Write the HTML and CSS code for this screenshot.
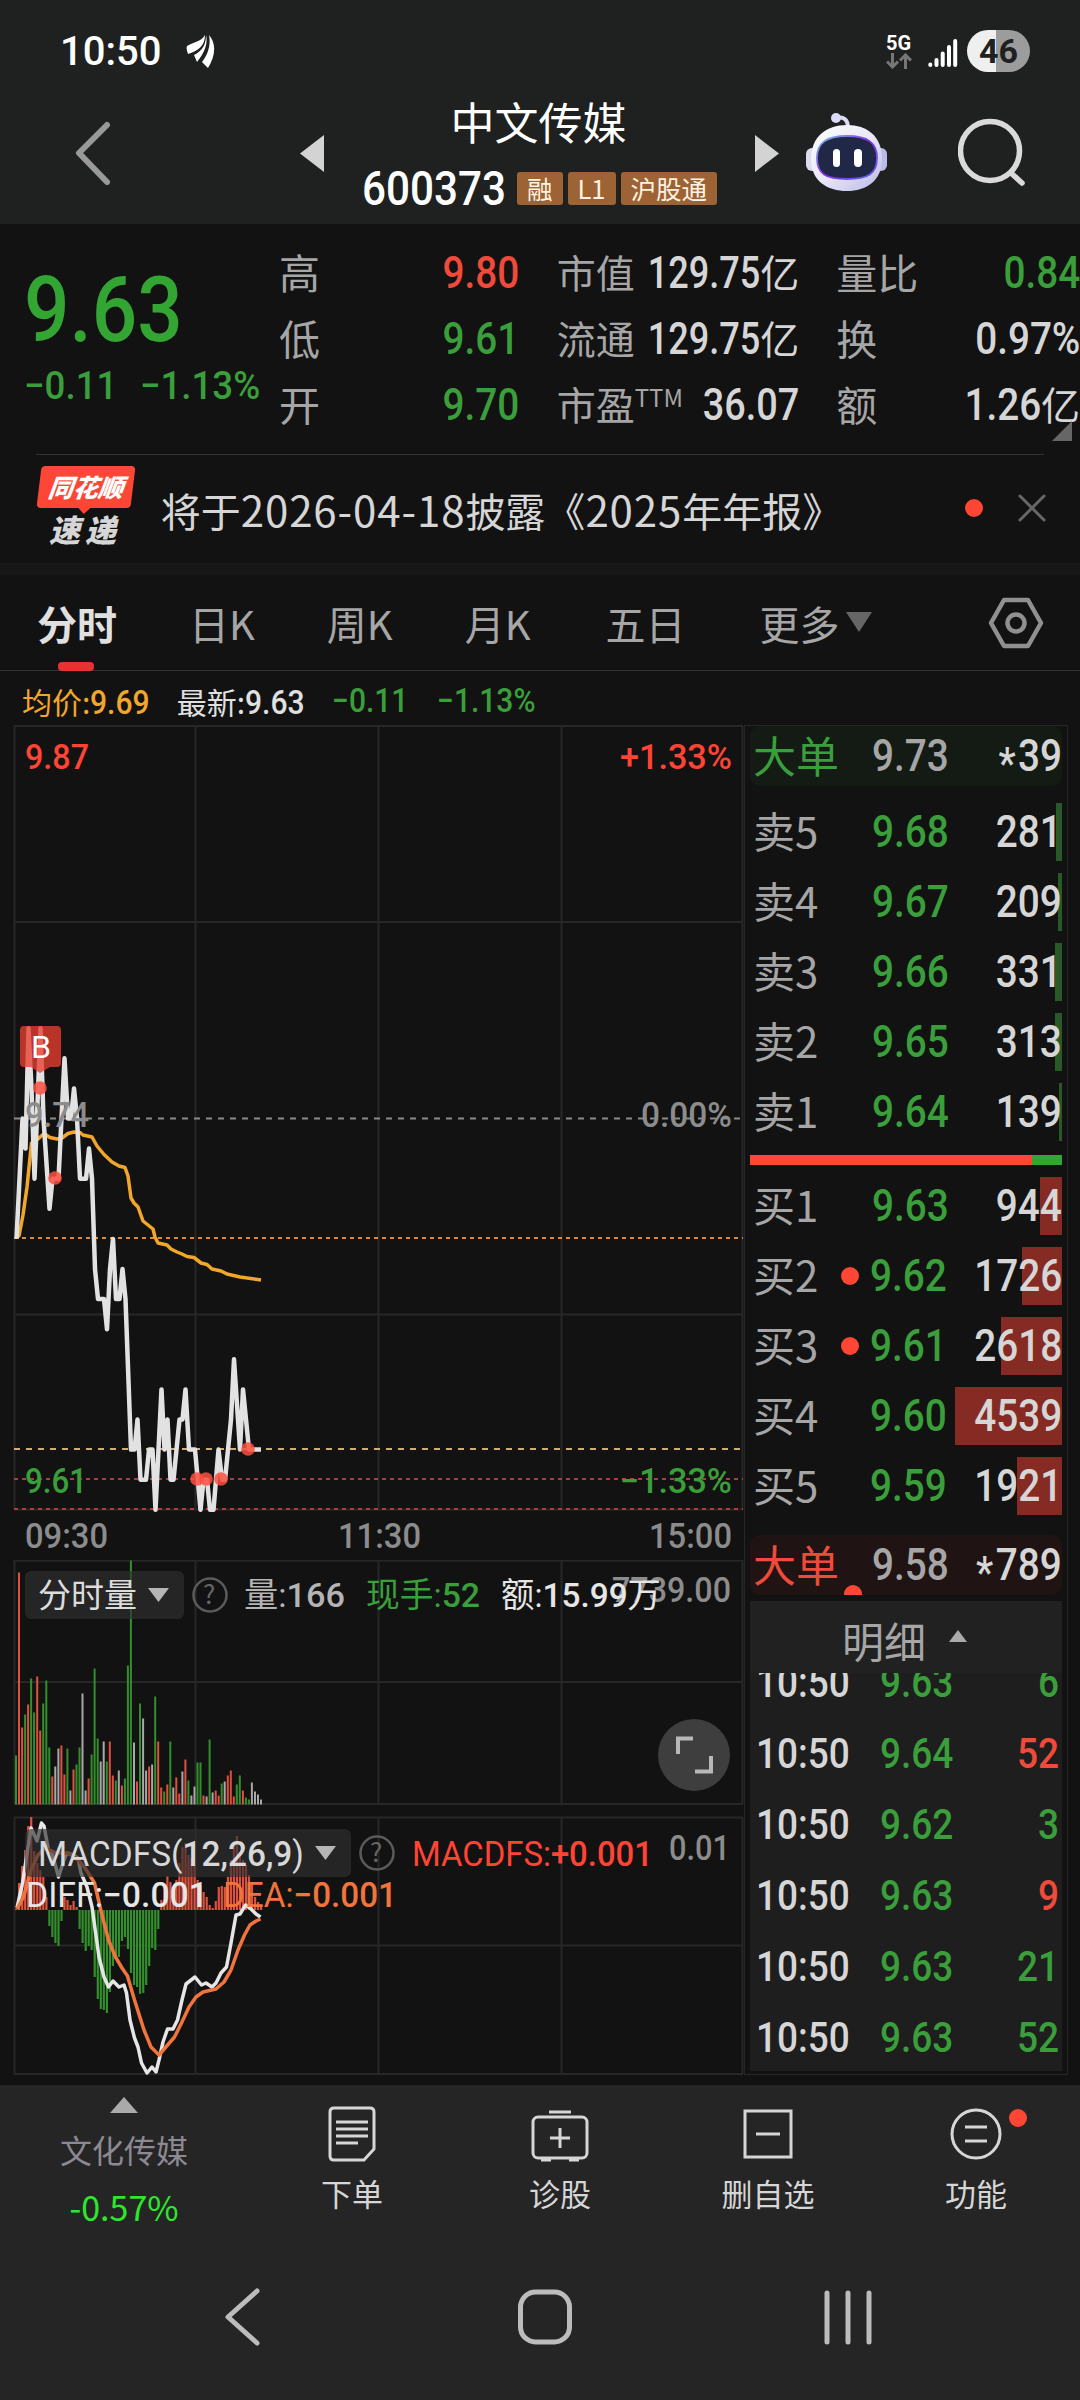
FILE: index.html
```html
<!-- index.html -->
<!DOCTYPE html>
<html lang="zh-CN">
<head>
    <meta charset="UTF-8">
    <title>中文传媒 600373</title>
    <link rel="stylesheet" href="styles.css">
</head>
<body>

    <!-- status bar -->
    <div class="statusbar">
        <span class="clock">10:50</span>
        <svg class="leaf" width="30" height="34" viewBox="0 0 30 34" fill="#fff">
            <path d="M1 12C9 7 15 8 19 1C19 12 12 17 2 20C1 17 0 14 1 12Z"/>
            <path d="M20 1C22 9 19 18 11 28L8 21C16 17 20 11 20 1Z"/>
            <path d="M23 1C31 10 29 23 22 34L16 28C22 20 25 11 23 1Z"/>
        </svg>
        <div class="status-right">
            <div class="network">
                <span>5G</span>
                <svg width="26" height="16" viewBox="0 0 26 16" fill="none" stroke="#777" stroke-width="3">
                    <path d="M6.5 0V14M1 8.5L6.5 14L12 8.5M19.500 16V2M14 7.500L19.500 2L25 7.500"/>
                </svg>
            </div>
            <svg class="signal" width="30" height="30" viewBox="0 0 30 30" stroke="#fff" stroke-width="4" stroke-linecap="round">
                <path d="M2.300 26.500V27M8.500 22V27M14.700 15.500V27M21 9V27M27.200 3V27"/>
            </svg>
            <span class="battery">46</span>
        </div>
    </div>

    <!-- title bar -->
    <div class="topbar">
        <svg class="back" width="36" height="64" viewBox="0 0 36 64" fill="none" stroke="#999" stroke-width="6" stroke-linecap="round" stroke-linejoin="round">
            <path d="M32 4L4 32L32 61"/>
        </svg>
        <svg class="prev" width="24" height="37" viewBox="0 0 24 37"><path d="M24 0V37L0 18.500Z" fill="#d3d3d3"/></svg>
        <div class="stock">
            <div class="stock-name">中文传媒</div>
            <div class="stock-code">
                <span class="num">600373</span>
                <span class="badge">融</span>
                <span class="badge">L1</span>
                <span class="badge">沪股通</span>
            </div>
        </div>
        <svg class="next" width="24" height="37" viewBox="0 0 24 37"><path d="M0 0V37L24 18.500Z" fill="#d3d3d3"/></svg>
        <svg class="robot" width="82" height="78" viewBox="0 0 82 78">
            <defs>
                <linearGradient id="shell" x1="0" y1="0" x2="1" y2="1">
                    <stop offset="0" stop-color="#ffffff"/>
                    <stop offset=".5" stop-color="#e9e8f8"/>
                    <stop offset="1" stop-color="#b9b7e6"/>
                </linearGradient>
                <linearGradient id="rim" x1="0" y1="0" x2="1" y2="1">
                    <stop offset="0" stop-color="#6cc8e0"/>
                    <stop offset=".5" stop-color="#8a2be0"/>
                    <stop offset="1" stop-color="#5a6af0"/>
                </linearGradient>
            </defs>
            <path d="M30 5C38 3 42 7 42 15" fill="none" stroke="#dcdcf5" stroke-width="4"/>
            <circle cx="30" cy="5" r="5" fill="#dcdcf8"/>
            <rect x="0" y="35" width="14" height="23" rx="6" fill="#dcdcf0"/>
            <rect x="68" y="35" width="13" height="23" rx="6" fill="#b9bbe8"/>
            <path d="M41 12C61 12 76 23 76 46C76 68 60 78 41 78C21 78 5 68 5 46C5 24 20 12 41 12Z" fill="url(#shell)"/>
            <path d="M41 23C62 23 71 30 71 45C71 61 62 66 41 66C20 66 11 61 11 45C11 30 20 23 41 23Z" fill="#212747" stroke="url(#rim)" stroke-width="1.800"/>
            <rect x="27" y="36" width="7" height="18" rx="3.500" fill="#fff"/>
            <rect x="48" y="36" width="8" height="18" rx="4" fill="#fff"/>
        </svg>
        <svg class="search" width="68" height="68" viewBox="0 0 68 68" fill="none" stroke="#dadada" stroke-width="5.500" stroke-linecap="round">
            <circle cx="32" cy="33" r="29.500"/>
            <path d="M53 55L64 65"/>
        </svg>
    </div>

    <!-- quote panel -->
    <div class="quote">
        <div class="price-box">
            <div class="price num green">9.63</div>
            <div class="change num green"><span>−0.11</span><span>−1.13%</span></div>
        </div>
        <div class="quote-col col-a">
            <div><label>高</label><b class="num red">9.80</b></div>
            <div><label>低</label><b class="num green">9.61</b></div>
            <div><label>开</label><b class="num green">9.70</b></div>
        </div>
        <div class="quote-col col-b">
            <div><label>市值</label><b class="num">129.75</b><i>亿</i></div>
            <div><label>流通</label><b class="num">129.75</b><i>亿</i></div>
            <div><label>市盈<sup>TTM</sup></label><b class="num">36.07</b></div>
        </div>
        <div class="quote-col col-c">
            <div><label>量比</label><b class="num green">0.84</b></div>
            <div><label>换</label><b class="num">0.97%</b></div>
            <div><label>额</label><b class="num">1.26</b><i>亿</i></div>
        </div>
        <span class="corner"></span>
    </div>

    <div class="notice">
        <div class="notice-logo">
            <span class="logo-top">同花顺</span>
            <span class="logo-bottom">速 递</span>
        </div>
        <span class="notice-text">将于<em>2026-04-18</em>披露《<em>2025</em>年年报》</span>
        <span class="dot"></span>
        <svg class="close" width="28" height="28" viewBox="0 0 28 28" stroke="#666" stroke-width="3" stroke-linecap="round"><path d="M2 2L26 26M26 2L2 26"/></svg>
    </div>

    <!-- period tabs -->
    <div class="tabs">
        <span class="tab active">分时</span>
        <span class="tab">日K</span>
        <span class="tab">周K</span>
        <span class="tab">月K</span>
        <span class="tab five">五日</span>
        <span class="tab more">更多</span>
        <svg class="setting" width="56" height="52" viewBox="0 0 56 52" fill="none" stroke="#909090" stroke-width="4.500" stroke-linejoin="round">
            <path d="M16 3H40L53 26L40 49H16L3 26Z"/>
            <circle cx="28" cy="26" r="8.500"/>
        </svg>
    </div>

    <div class="info">
        <span class="orange">均价:<b class="num">9.69</b></span>
        <span class="white">最新:<b class="num">9.63</b></span>
        <span class="num green">−0.11</span>
        <span class="num green">−1.13%</span>
    </div>

    <div class="main">
        <div class="charts">

            <svg class="chart" width="744" height="835" viewBox="0 725 744 835">
                <g class="grid">
                    <path d="M14.500 726V1509M195.500 726V1509M378.500 726V1509M561.500 726V1509M742.500 726V1509"/>
                    <path d="M14 726H743M14 922H743M14 1314.500H743M14 1509.500H743"/>
                </g>
                <path d="M14 1118.500H743" stroke="#8a8a8a" stroke-width="2" stroke-dasharray="6 6"/>
                <path d="M14 1238H743" stroke="#d98a3c" stroke-width="2" stroke-dasharray="4 4"/>
                <path d="M14 1449H743" stroke="#cfae74" stroke-width="2" stroke-dasharray="6 6"/>
                <path d="M14 1479H743M14 1509H743" stroke="#b23a44" stroke-width="2" stroke-dasharray="4 4"/>
                <polyline id="avg-line" fill="none" stroke="#f2a72a" stroke-width="3.500" stroke-linejoin="round"/>
                <polyline id="price-line" fill="none" stroke="#e2e2e2" stroke-width="4.500" stroke-linejoin="round"/>
                <g id="trade-dots" fill="#fa5040" fill-opacity=".85"></g>
                <path d="M24 1026H57Q61 1026 61 1030V1063Q61 1067 57 1067H50L40 1073L31 1067H24Q20 1067 20 1063V1030Q20 1026 24 1026Z" fill="#e93c2e" fill-opacity=".78"/>
                <text class="latin" x="31" y="1058" font-size="32" fill="#fff" textLength="20" lengthAdjust="spacingAndGlyphs">B</text>
                <g class="label" font-size="35">
                    <text x="25" y="769" fill="#ff4433" textLength="64" lengthAdjust="spacingAndGlyphs">9.87</text>
                    <text x="620" y="769" fill="#ff4433" textLength="112" lengthAdjust="spacingAndGlyphs">+1.33%</text>
                    <text x="25" y="1127" fill="#8c8c8c" textLength="64" lengthAdjust="spacingAndGlyphs">9.74</text>
                    <text x="641" y="1127" fill="#8c8c8c" textLength="91" lengthAdjust="spacingAndGlyphs">0.00%</text>
                    <text x="25" y="1493" fill="#3a9f3a" textLength="62" lengthAdjust="spacingAndGlyphs">9.61</text>
                    <text x="620" y="1493" fill="#3a9f3a" textLength="112" lengthAdjust="spacingAndGlyphs">−1.33%</text>
                    <text x="25" y="1548" fill="#8c8c8c" textLength="83" lengthAdjust="spacingAndGlyphs">09:30</text>
                    <text x="338" y="1548" fill="#8c8c8c" textLength="83" lengthAdjust="spacingAndGlyphs">11:30</text>
                    <text x="649" y="1548" fill="#8c8c8c" textLength="83" lengthAdjust="spacingAndGlyphs">15:00</text>
                </g>
            </svg>

            <svg class="chart" width="744" height="256" viewBox="0 1560 744 256">
                <g class="grid">
                    <path d="M14.500 1560V1804M195.500 1560V1804M378.500 1560V1804M561.500 1560V1804M742.500 1560V1804"/>
                    <path d="M14 1560.500H743M14 1682H743M14 1804H743"/>
                </g>
                <g id="volume"></g>
                <rect x="25" y="1571" width="159" height="48" rx="6" fill="#303030" fill-opacity=".65"/>
                <text x="38" y="1607" font-size="33" fill="#dcdcdc" textLength="99">分时量</text>
                <path d="M148 1588H169L158.500 1602Z" fill="#b5b5b5"/>
                <circle cx="210" cy="1595" r="16.500" class="help"/>
                <text x="203" y="1604" font-size="26" fill="#666">?</text>
                <text class="label" x="612" y="1602" font-size="35" fill="#8c8c8c" textLength="119" lengthAdjust="spacingAndGlyphs">7739.00</text>
                <g class="mix" font-size="34">
                    <text x="244" y="1607" fill="#b4b4b4" textLength="101" lengthAdjust="spacingAndGlyphs">量:<tspan class="label">166</tspan></text>
                    <text x="366" y="1607" fill="#3a9f3a" textLength="114" lengthAdjust="spacingAndGlyphs">现手:<tspan class="label">52</tspan></text>
                    <text x="501" y="1607" fill="#e6e6e6" textLength="160" lengthAdjust="spacingAndGlyphs">额:<tspan class="label">15.99</tspan>万</text>
                </g>
                <circle cx="694" cy="1755" r="36" fill="#3e3e3e"/>
                <path d="M678 1754V1738.500H693M695 1771.500H711V1756" fill="none" stroke="#b8b8b8" stroke-width="4"/>
            </svg>

            <svg class="chart" width="744" height="260" viewBox="0 1816 744 260">
                <g class="grid">
                    <path d="M14.500 1817V2074M195.500 1817V2074M378.500 1817V2074M561.500 1817V2074M742.500 1817V2074"/>
                    <path d="M14 1817.500H743M14 1945.500H743M14 2074H743"/>
                </g>
                <g id="macd"></g>
                <polyline id="diff-line" fill="none" stroke="#e6e6e6" stroke-width="3.500" stroke-linejoin="round"/>
                <polyline id="dea-line" fill="none" stroke="#f0743c" stroke-width="3.500" stroke-linejoin="round"/>
                <rect x="25" y="1829" width="326" height="48" rx="6" fill="#303030" fill-opacity=".65"/>
                <g class="mix" font-size="35">
                    <text x="38" y="1866" fill="#d8d8d8" textLength="266" lengthAdjust="spacingAndGlyphs">MACDFS(<tspan class="label">12,26,9</tspan>)</text>
                    <text x="412" y="1866" fill="#ff4433" textLength="241" lengthAdjust="spacingAndGlyphs">MACDFS:<tspan class="label">+0.001</tspan></text>
                    <text x="26" y="1907" fill="#e6e6e6" textLength="182" lengthAdjust="spacingAndGlyphs">DIFF:<tspan class="label">−0.001</tspan></text>
                    <text x="223" y="1907" fill="#f0743c" textLength="174" lengthAdjust="spacingAndGlyphs">DEA:<tspan class="label">−0.001</tspan></text>
                </g>
                <text class="label" x="669" y="1860" font-size="35" fill="#8c8c8c" textLength="61" lengthAdjust="spacingAndGlyphs">0.01</text>
                <path d="M315 1846H336L325.500 1860Z" fill="#b5b5b5"/>
                <circle cx="377" cy="1853" r="16.500" class="help"/>
                <text x="370" y="1862" font-size="26" fill="#666">?</text>
            </svg>
        </div>

        <!-- order book -->
        <div class="book">
            <div class="big sell"><label>大单</label><b class="num">9.73</b><b class="num qty"><sub>*</sub>39</b></div>
            <div class="rows" id="sell-rows"></div>
            <div class="ratio"><span></span></div>
            <div class="rows" id="buy-rows"></div>
            <div class="big buy"><label>大单</label><b class="num">9.58</b><b class="num qty"><sub>*</sub>789</b></div>
            <div class="detail">
                <div class="detail-head">明细<span class="up"></span></div>
                <div class="detail-list" id="detail-list"></div>
            </div>
        </div>
    </div>

    <!-- bottom bar -->
    <div class="bottom">
        <div class="sector">
            <span class="up"></span>
            <span class="sector-name">文化传媒</span>
            <span class="sector-pct">-0.57%</span>
        </div>
        <div class="action">
            <svg width="50" height="58" viewBox="0 0 50 58" class="line">
                <path d="M7 3H43Q47 3 47 7V44L37 55H7Q3 55 3 51V7Q3 3 7 3Z"/>
                <path d="M9 17H41M9 24H41M9 31H41M9 38H31"/>
            </svg>
            <span>下单</span>
        </div>
        <div class="action">
            <svg width="58" height="58" viewBox="0 0 58 58" class="line">
                <rect x="2" y="12" width="54" height="41" rx="5"/>
                <path d="M18 7H40M29 23V43M19 33H39M10 55H20M38 55H48"/>
            </svg>
            <span>诊股</span>
        </div>
        <div class="action">
            <svg width="50" height="58" viewBox="0 0 50 58" class="line">
                <rect x="2" y="6" width="46" height="46"/>
                <path d="M13 29H37"/>
            </svg>
            <span>删自选</span>
        </div>
        <div class="action">
            <svg width="52" height="58" viewBox="0 0 52 58" class="line">
                <circle cx="26" cy="29" r="24"/>
                <path d="M15 22H37M15 36H37"/>
            </svg>
            <span>功能</span>
            <i class="badge-dot"></i>
        </div>
    </div>

    <div class="navbar">
        <svg width="36" height="58" viewBox="0 0 36 58"><path d="M33 3L4 29L33 55"/></svg>
        <svg width="56" height="58" viewBox="0 0 56 58"><rect x="3.500" y="4" width="49" height="50" rx="15"/></svg>
        <svg width="48" height="58" viewBox="0 0 48 58"><path d="M3 5V54M24 5V54M45 5V54"/></svg>
    </div>

    <script>
        const RED = '#e0503f', GREEN = '#338f2c', GRAY = '#a8a8a8';

        // minute price: [x, price]
        const prices = [[16.500,9.70],[22.500,9.74],[25.500,9.73],[28.500,9.77],[31.500,9.75],[34.500,9.72],[40.500,9.77],[43.500,9.74],[49.500,9.71],[52.500,9.72],[58.500,9.72],[61.500,9.74],[64.500,9.76],[68,9.74],[71,9.74],[74,9.75],[77,9.74],[80,9.72],[86,9.72],[89,9.73],[92,9.72],[95,9.69],[98,9.68],[104,9.68],[107,9.67],[110,9.69],[113,9.70],[116,9.68],[119.500,9.68],[122.500,9.69],[125.500,9.68],[131,9.63],[134.500,9.63],[137.500,9.64],[140.500,9.62],[146,9.62],[149,9.63],[152.500,9.63],[155.500,9.61],[161.500,9.65],[164.500,9.63],[167.500,9.64],[170.500,9.62],[173.500,9.62],[179.500,9.64],[182.500,9.64],[185.500,9.65],[189,9.63],[195,9.63],[200.500,9.61],[203.500,9.62],[207,9.62],[210,9.61],[213.500,9.61],[218.500,9.63],[222,9.62],[225,9.62],[231,9.64],[234,9.66],[240,9.63],[243,9.65],[249,9.63],[261,9.63]];
        document.getElementById('price-line').setAttribute('points',
            prices.map(p => p[0] + ',' + (1118.500 + (9.74 - p[1]) * 3010).toFixed(1)).join(' '));

        const avg = [[16,1236],[19,1236],[23,1215],[27,1187],[31.500,1143],[34,1141],[38,1139],[44,1133.500],[50,1137.500],[57,1139],[62,1138],[68,1133.500],[74,1132],[80,1132.500],[83,1135],[92,1137],[97,1146],[104,1154.500],[112,1162],[119,1166],[125,1167.500],[128,1176],[131,1198],[134,1203],[138,1207],[143,1221],[153,1229],[155,1237],[158,1243],[167,1245],[171,1249],[177,1252],[182,1254],[187,1256.500],[194,1257.500],[201,1263],[207,1264.500],[212,1269],[221,1271],[227,1274],[240,1277],[261,1280]];
        document.getElementById('avg-line').setAttribute('points', avg.join(' '));

        document.getElementById('trade-dots').innerHTML =
            [[40,1088],[55,1178],[197,1479],[206,1479],[221,1479],[248,1449]]
            .map(d => `<circle cx="${d[0]}" cy="${d[1]}" r="6.800"/>`).join('');

        // volume bars, height in px
        const vol = 'g49 r232 r77 g90 r100 g126 g92 r128 r74 g101 g124 g57 r28 w38 w56 r59 r30 g56 w14 r35 g40 g57 w111 w14 r26 g50 g136 g66 w43 w63 g43 r63 r29 g24 w34 r19 g26 g139 g244 w62 r23 g101 w86 w34 r38 w40 g108 r63 r17 g13 r20 g63 w17 r27 r11 w33 r45 g24 w9 w18 g42 g42 r9 w8 g65 w12 r14 r9 g21 w23 r29 r34 r8 g20 g29 r14 g7 g5 w22 w13 w10 w5'.split(' ');
        const fills = { r: RED, g: GREEN, w: GRAY };
        document.getElementById('volume').innerHTML = vol.map((v, i) => {
            const h = +v.slice(1);
            return `<rect x="${(15 + i * 3.025).toFixed(1)}" y="${1804.500 - h}" width="2" height="${h}" fill="${fills[v[0]]}"/>`;
        }).join('');

        // macd bars, above / below zero
        const macd = [1,27,44,60,84,93,59,47,40,33,13,-16,-27,-33,-36,-11,13,10,5,9,3,-19,-33,-41,-36,-40,-67,-89,-99,-100,-103,-82,-56,-47,-47,-31,-27,-39,-63,-75,-77,-84,-83,-75,-56,-38,-40,-19,10,23,34,28,23,30,47,63,67,55,52,45,30,25,18,13,5,2,9,23,24,23,33,50,65,74,57,50,45,35,27,13,8,5];
        document.getElementById('macd').innerHTML = macd.map((m, i) =>
            `<rect x="${(15 + i * 3.025).toFixed(1)}" y="${m > 0 ? 1910 - m : 1910}" width="2.200" height="${Math.abs(m)}" fill="${m > 0 ? RED : GREEN}"/>`
        ).join('');

        const diff = [[17,1908],[22.500,1883],[31,1828],[37,1841],[41.500,1823],[44,1826],[48.500,1850],[52,1853],[58.500,1877],[64,1860],[67,1853],[73,1855],[78,1858],[81,1873],[87,1887],[92,1907],[99,1957],[104,1977],[108.500,1987],[113,1981],[119,1987],[124,1985],[126.500,1993],[130,2020],[134.500,2038],[138,2047],[141.500,2063],[147,2073],[152,2067],[156,2072],[159,2060],[163,2042],[167.500,2029],[173,2029],[177.500,2020],[182,2000],[186,1984],[195,1977],[201.500,1985],[206,1983],[212,1987],[216,1983],[221,1973],[226.500,1967],[231,1943],[236,1915],[240,1914],[245.500,1905],[250,1908],[256,1914],[260.500,1917]];
        const dea = [[17,1909],[23.500,1897],[31,1870],[38,1855],[45,1848],[56.500,1853],[68.500,1853],[78,1860],[85,1868],[94.500,1883],[101.500,1913],[108.500,1940],[115.500,1957],[122,1968],[127.500,1976],[134.500,2000],[144,2030],[151,2047],[159,2055],[165,2048],[174.500,2037],[181.500,2023],[189,2007],[196,1997],[203,1992],[216,1989],[224,1982],[231,1970],[238,1950],[244.500,1935],[250,1925],[256,1921],[260.500,1919]];
        document.getElementById('diff-line').setAttribute('points', diff.join(' '));
        document.getElementById('dea-line').setAttribute('points', dea.join(' '));

        // order book: name, price, qty, bar width, marked
        const sells = [['卖5','9.68',281,6],['卖4','9.67',209,4],['卖3','9.66',331,7],['卖2','9.65',313,7],['卖1','9.64',139,3]];
        const buys = [['买1','9.63',944,22],['买2','9.62',1726,40,1],['买3','9.61',2618,61,1],['买4','9.60',4539,107],['买5','9.59',1921,45]];
        const row = r => `<div class="row"><i class="bar" style="width:${r[3]}px"></i><label>${r[0]}</label>${r[4] ? '<span class="dot"></span>' : ''}<b class="num green">${r[1]}</b><b class="num qty">${r[2]}</b></div>`;
        document.getElementById('sell-rows').innerHTML = sells.map(row).join('');
        document.getElementById('buy-rows').innerHTML = buys.map(row).join('');

        const details = [['9.63',6,'green'],['9.64',52,'red'],['9.62',3,'green'],['9.63',9,'red'],['9.63',21,'green'],['9.63',52,'green']];
        document.getElementById('detail-list').innerHTML = details.map(d =>
            `<div class="deal"><span class="num">10:50</span><span class="num green">${d[0]}</span><span class="num vol ${d[2]}">${d[1]}</span></div>`
        ).join('');
    </script>
</body>
</html>
```

FILE: styles.css
```css
* {
    box-sizing: border-box;
}
body {
    margin: 0;
    width: 1080px;
    height: 2400px;
    overflow: hidden;
    background-color: #121212;
    color: #d6d6d6;
    font-family: "Noto Sans CJK SC", sans-serif;
}
svg {
    display: block;
    flex: none;
}
b, i, em {
    font-weight: inherit;
    font-style: normal;
}
/* narrow digits */
.num {
    display: inline-block;
    font-family: Roboto, "Noto Sans CJK SC", sans-serif;
    font-weight: 500;
    transform: scaleX(0.86);
    transform-origin: left center;
}
.label {
    font-family: Roboto, sans-serif;
    font-weight: 500;
}
.latin {
    font-family: Roboto, sans-serif;
}
.red {
    color: #f04b3a;
}
.green {
    color: #3a9f3a;
}
.orange {
    color: #f2a72a;
}
.white {
    color: #e0e0e0;
}

/* status bar */
.statusbar {
    display: flex;
    align-items: center;
    height: 104px;
    padding: 0 50px 2px 60px;
    background-color: #1f2120;
    color: #fff;
}
.clock {
    width: 126px;
    font: 500 40px Roboto, sans-serif;
}
.status-right {
    display: flex;
    align-items: center;
    margin-left: auto;
}
.network {
    width: 26px;
    margin-right: 16px;
    font: 700 20px/20px Roboto, sans-serif;
}
.signal {
    margin: 4px 9px 0 0;
}
.battery {
    width: 63px;
    height: 42px;
    border-radius: 21px;
    background: linear-gradient(90deg, #efefef 46%, #9c9c9c 46%);
    color: #1f2120;
    font: 700 34px/43px Roboto, sans-serif;
    text-align: center;
}

/* title bar */
.topbar {
    display: flex;
    height: 120px;
    padding-left: 75px;
    background-color: #1f2120;
}
.back {
    margin: 17px 189px 0 0;
}
.prev, .next {
    margin-top: 31px;
}
.stock {
    width: 431px;
    padding-left: 38px;
}
.stock-name {
    height: 62px;
    padding-right: 40px;
    color: #fff;
    font-size: 44px;
    line-height: 34px;
    text-align: center;
}
.stock-code {
    display: flex;
    align-items: center;
    gap: 5px;
    height: 45px;
}
.stock-code .num {
    width: 150px;
    color: #fff;
    font-size: 48px;
    transform: scaleX(0.88);
}
.badge {
    height: 33px;
    padding: 0 10px;
    border-radius: 3px;
    background-color: #9d6335;
    color: #fff3e2;
    font-size: 25.5px;
    line-height: 31px;
}
.robot {
    margin: 9px 0 0 27px;
}
.search {
    margin: 14px 0 0 70px;
}

/* quote */
.quote {
    position: relative;
    display: flex;
    height: 231px;
    margin: 0 0 0 36px;
    padding-top: 16px;
}
.quote::after {
    content: "";
    position: absolute;
    left: 0;
    right: 36px;
    bottom: 0;
    height: 1px;
    background-color: #353535;
}
.price-box {
    width: 244px;
    margin-left: -12px;
}
.price {
    height: 104px;
    margin-bottom: 22px;
    color: #33a533;
    font-size: 90px;
    line-height: 141px;
    transform: scaleX(0.89);
}
.change {
    display: flex;
    gap: 24px;
    font-size: 39px;
    line-height: 40px;
    white-space: nowrap;
    transform: scaleX(0.94);
}
.quote-col > div {
    display: flex;
    align-items: center;
    height: 66px;
    white-space: nowrap;
}
.quote-col label {
    margin-right: auto;
    padding-bottom: 4px;
    color: #a6a6a6;
    font-size: 41px;
    line-height: 60px;
}
.quote-col .num {
    margin-left: -20px;
    font-size: 45px;
    line-height: 66px;
    transform-origin: right center;
}
.quote-col i {
    padding-bottom: 4px;
    font-size: 39px;
}
.quote-col sup {
    position: relative;
    top: -4px;
    font-size: 24px;
    vertical-align: 9px;
    line-height: 0;
}
.col-a {
    width: 241px;
    margin-left: 11px;
}
.col-b {
    width: 243px;
    margin-left: 37px;
}
.col-b label {
    font-size: 39px;
}
.col-b .num {
    font-size: 44px;
    transform: scaleX(0.82);
}
.col-b > div:last-child .num {
    transform: scaleX(0.86);
}
.col-c {
    width: 244px;
    margin-left: 37px;
}
.corner {
    position: absolute;
    left: 1016px;
    top: 197px;
    border-left: 20px solid transparent;
    border-bottom: 20px solid #666;
}

/* notice */
.notice {
    display: flex;
    align-items: center;
    height: 120px;
    padding: 0 34px 2px 37px;
    border-bottom: 12px solid #171717;
}
.notice-logo {
    width: 124px;
    font-weight: 900;
    font-style: italic;
}
.logo-top {
    position: relative;
    display: block;
    width: 94px;
    height: 42px;
    margin-left: 2px;
    border-radius: 4px;
    background-color: #fc4636;
    transform: skewX(-7deg);
    color: #fff;
    font-size: 25px;
    line-height: 40px;
    text-align: center;
}
.logo-top::after {
    content: "";
    position: absolute;
    left: 42px;
    top: 42px;
    border: 6px solid transparent;
    border-top-color: #fc4636;
}
.logo-bottom {
    display: block;
    padding-left: 12px;
    font-size: 31px;
    line-height: 42px;
    word-spacing: -2px;
}
.notice-text {
    width: 806px;
    font-size: 40px;
    white-space: nowrap;
}
.notice-text em {
    font-size: 42px;
    letter-spacing: 0.9px;
}
.dot {
    width: 18px;
    height: 18px;
    border-radius: 50%;
    background-color: #ff4534;
}
.close {
    margin-left: 35px;
}

/* tabs */
.tabs {
    display: flex;
    align-items: center;
    height: 96px;
    padding: 0 36px 0 37px;
    border-bottom: 1px solid #333;
    color: #a6a6a6;
    font-size: 40px;
}
.tab {
    position: relative;
    margin-right: 72px;
    white-space: nowrap;
}
.tab.active {
    color: #e0e0e0;
    font-weight: 600;
}
.tab.active::after {
    content: "";
    position: absolute;
    left: 21px;
    bottom: -19px;
    width: 36px;
    height: 9px;
    border-radius: 4px;
    background-color: #e83232;
}
.tab.five {
    margin: 0 74px 0 3px;
}
.more::after {
    content: "";
    position: absolute;
    left: 86px;
    top: 18px;
    border: 13px solid transparent;
    border-top: 20px solid #666;
    border-bottom: 0;
}
.setting {
    margin-left: auto;
}
.info {
    display: flex;
    align-items: center;
    gap: 27px;
    height: 54px;
    padding: 5px 22px 0;
    font-size: 30px;
}
.info .num {
    margin-right: -6px;
    font-size: 33px;
    transform: scaleX(0.91);
}

/* charts */
.main {
    display: flex;
    height: 1360px;
}
.grid {
    fill: none;
    stroke: #272727;
    stroke-width: 2;
}
.mix {
    font-family: Roboto, "Noto Sans CJK SC", sans-serif;
}
.help {
    fill: none;
    stroke: #5a5a5a;
    stroke-width: 2.5;
}

/* order book */
.book {
    width: 324px;
    height: 1350px;
    padding: 0 5px;
    border: 1px solid #262626;
}
.big, .row {
    position: relative;
    display: flex;
    align-items: center;
    color: #a6a6a6;
    font-size: 42px;
}
.big label, .row label {
    width: 122px;
    padding: 0 0 5px 3px;
    line-height: 58px;
}
.big label {
    font-size: 43px;
}
.big .num, .row .num {
    font-size: 45px;
    line-height: 58px;
}
.big .qty, .row .qty {
    position: relative;
    margin-left: auto;
    color: #d6d6d6;
    transform-origin: right center;
}
.big sub {
    position: relative;
    top: 8px;
    margin-right: 3px;
    font-size: 45px;
    line-height: 0;
    vertical-align: baseline;
}
.big {
    height: 60px;
    border-radius: 10px;
}
.big.sell {
    margin-bottom: 11px;
    background-color: #131b14;
}
.big.sell label {
    color: #3a9f3a;
}
.big.buy {
    margin: 14px 0 6px;
    overflow: hidden;
    background-color: #1f1413;
}
.big.buy label {
    color: #f04b3a;
}
.big.buy::after {
    content: "";
    position: absolute;
    left: 94px;
    top: 50px;
    width: 18px;
    height: 18px;
    border-radius: 50%;
    background-color: #ff4534;
}
.row {
    height: 70px;
}
.row .dot {
    position: absolute;
    left: 91px;
}
.bar {
    position: absolute;
    right: 0;
    top: 6px;
    height: 58px;
    background-color: #275a27;
}
#buy-rows .bar {
    background-color: #862b23;
}
.ratio {
    height: 10px;
    margin: 8px 0 6px;
    background-color: #33a533;
}
.ratio span {
    display: block;
    width: 282px;
    height: 10px;
    background-color: #ff4534;
}
.detail {
    height: 470px;
    overflow: hidden;
    background-color: #1e1e1e;
}
.detail-head {
    position: relative;
    height: 72px;
    padding-left: 92px;
    background-color: #212121;
    color: #a6a6a6;
    font-size: 42px;
    line-height: 77px;
}
.up {
    border: 9px solid transparent;
    border-top: 0;
    border-bottom: 12px solid #aaa;
}
.detail-head .up {
    position: absolute;
    left: 199px;
    top: 29px;
}
.detail-list {
    height: 398px;
    overflow: hidden;
}
.deal {
    display: grid;
    grid-template-columns: 124px 100px 1fr;
    height: 71px;
    padding: 0 3px 0 6px;
    font-size: 43px;
    line-height: 73px;
}
.deal:first-child {
    margin-top: -27px;
}
.deal .vol {
    text-align: right;
    transform-origin: right center;
}

/* bottom bar */
.bottom {
    display: grid;
    grid-template-columns: 248px repeat(4, 208px);
    height: 160px;
    background-color: #252525;
}
.sector, .action {
    position: relative;
    display: flex;
    flex-direction: column;
    align-items: center;
}
.sector {
    padding-top: 12px;
}
.sector .up {
    border-width: 0 14px 16px;
}
.sector-name {
    height: 60px;
    margin-top: 14px;
    color: #8c8993;
    font-size: 32px;
    line-height: 45px;
}
.sector-pct {
    color: #2ce82c;
    font-size: 34px;
    line-height: 40px;
}
.action {
    padding-top: 20px;
    font-size: 31px;
    line-height: 59px;
}
.line {
    fill: none;
    stroke: #d6d6d6;
    stroke-width: 3;
}
.badge-dot {
    position: absolute;
    left: 137px;
    top: 24px;
    width: 18px;
    height: 18px;
    border-radius: 50%;
    background-color: #ff4534;
}
.navbar {
    display: flex;
    height: 155px;
    padding: 43px 0 0 224px;
    background-color: #252525;
}
.navbar svg {
    fill: none;
    stroke: #bcbcbc;
    stroke-width: 5;
    stroke-linecap: round;
    stroke-linejoin: round;
}
.navbar svg:nth-child(2) {
    margin: 0 251px 0 257px;
}
```
